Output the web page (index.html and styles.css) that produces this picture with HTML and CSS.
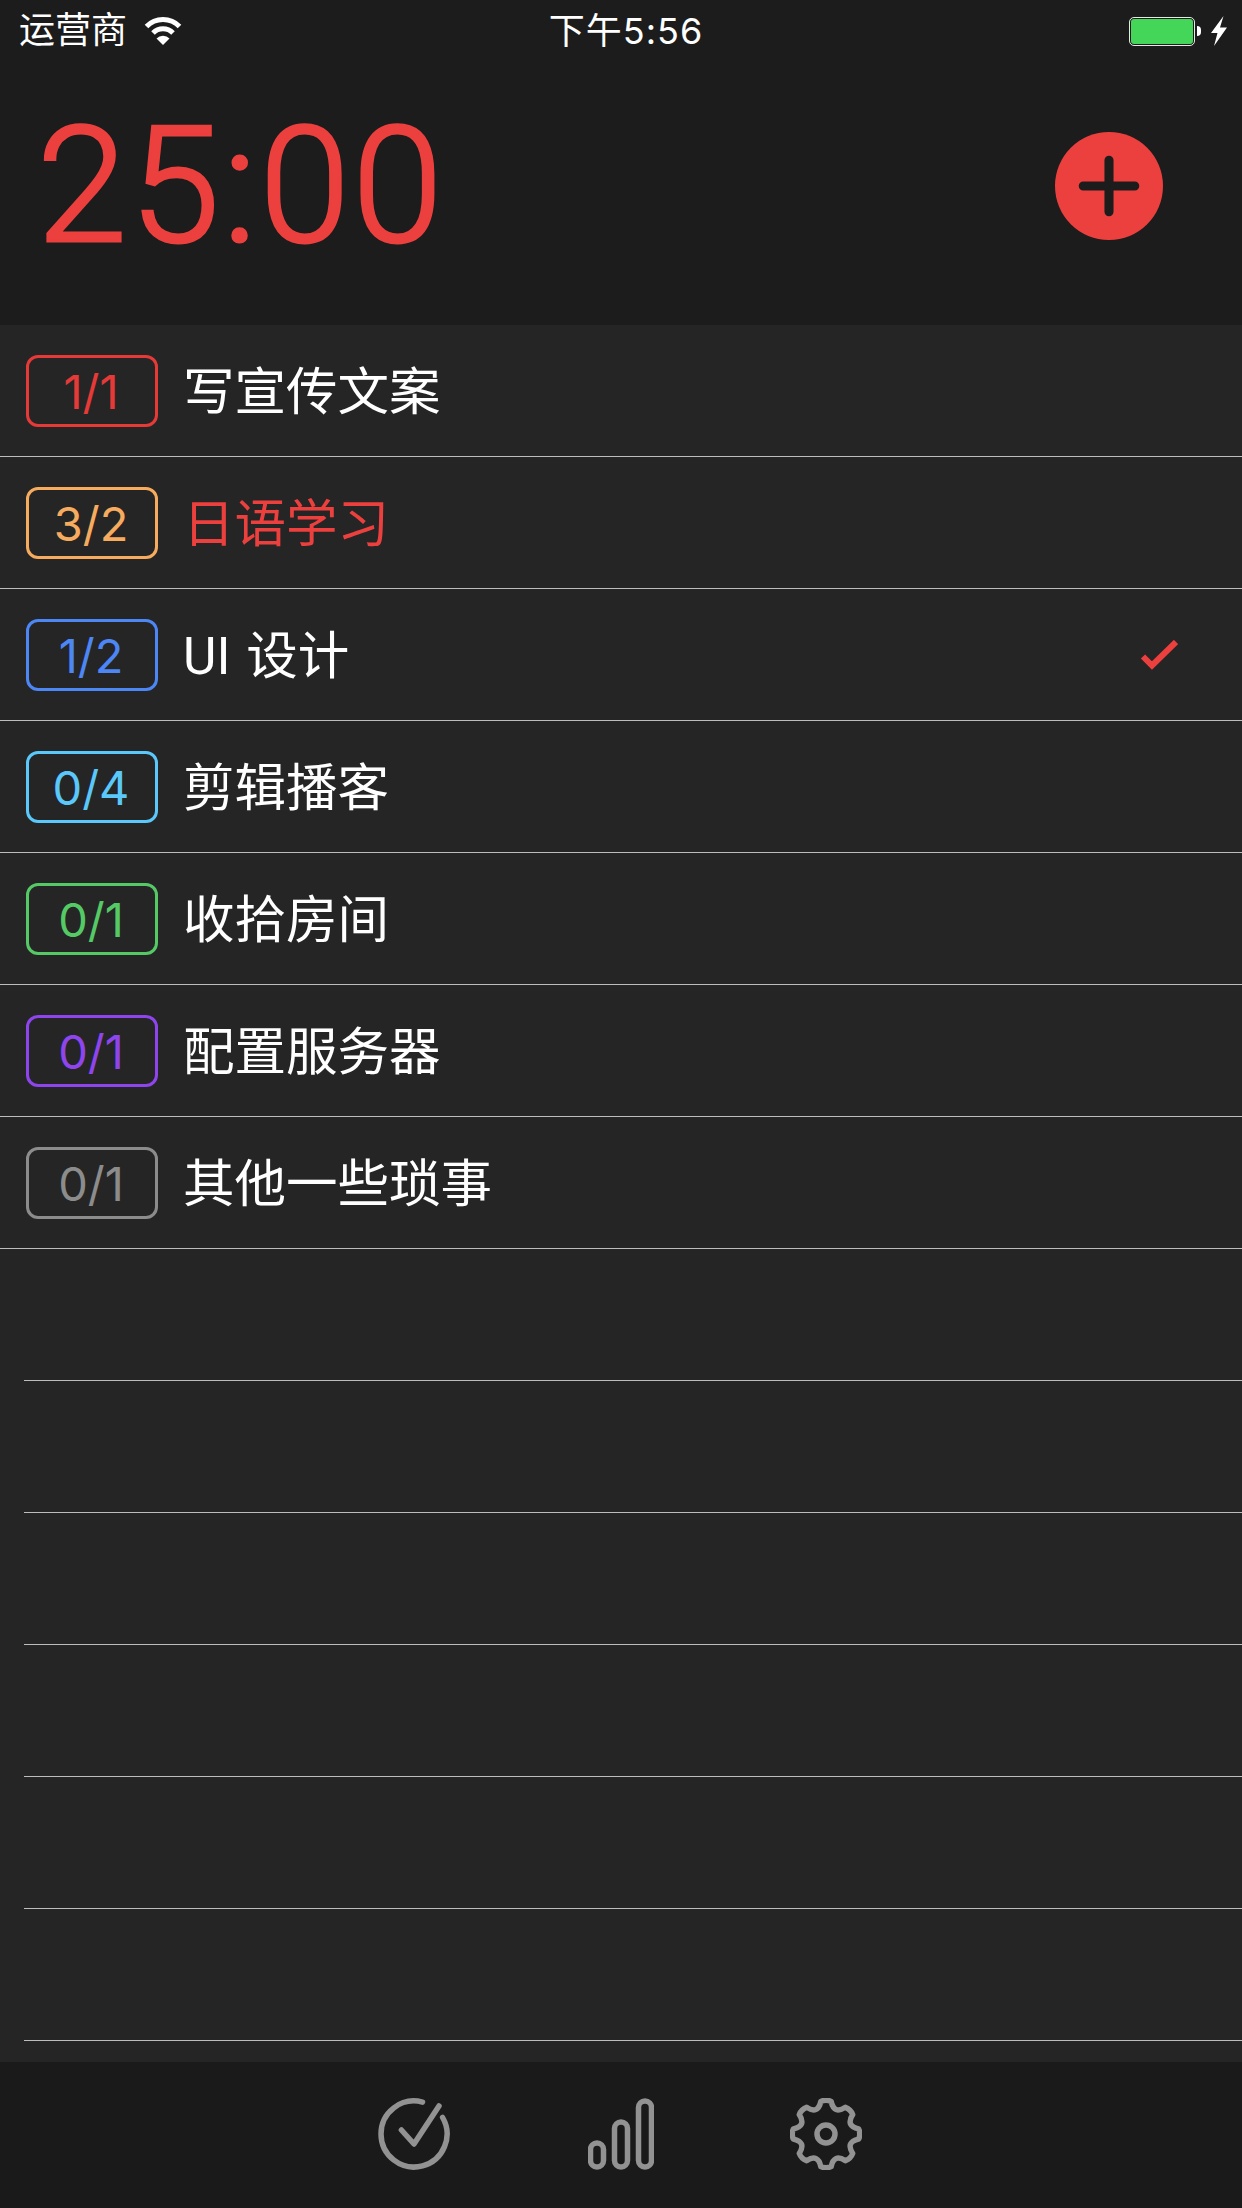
FILE: index.html
```html
<!DOCTYPE html>
<html lang="zh-CN">
<head>
    <meta charset="UTF-8">
    <meta name="viewport" content="width=device-width, initial-scale=1.0">
    <title>番茄任务</title>
    <link rel="stylesheet" href="styles.css">
</head>
<body>
    <div class="header">
        <div class="status-bar">
            <div class="status-left">
                <span class="carrier">运营商</span>
                <svg class="wifi" viewBox="0 0 38 28">
                    <path d="M2.5 9.5 A23 23 0 0 1 35.5 9.5" class="wifi-arc"/>
                    <path d="M9 16 A14 14 0 0 1 29 16" class="wifi-arc"/>
                    <path d="M19 28 L12.5 21.5 A9 9 0 0 1 25.5 21.5 Z" class="wifi-dot"/>
                </svg>
            </div>
            <span class="clock">下午5:56</span>
            <div class="status-right">
                <div class="battery"><div class="battery-fill"></div></div>
                <div class="battery-nub"></div>
                <svg class="bolt" viewBox="0 0 16 30">
                    <polygon points="12.5,0 0,17 6.5,17 3,30 16,11.5 9,11.5"/>
                </svg>
            </div>
        </div>
        <div class="timer-row">
            <span class="timer">25:00</span>
            <button class="add-btn">
                <svg viewBox="0 0 107 107">
                    <path d="M53.5 28 V79 M28 53.5 H79"/>
                </svg>
            </button>
        </div>
    </div>

    <div class="list">
        <div class="row">
            <span class="badge badge-red">1/1</span>
            <span class="title">写宣传文案</span>
        </div>
        <div class="row">
            <span class="badge badge-orange">3/2</span>
            <span class="title title-over">日语学习</span>
        </div>
        <div class="row">
            <span class="badge badge-blue">1/2</span>
            <span class="title">UI 设计</span>
            <svg class="done" viewBox="0 0 38 30">
                <path d="M3 16.5 L12 25.5 L36 2"/>
            </svg>
        </div>
        <div class="row">
            <span class="badge badge-cyan">0/4</span>
            <span class="title">剪辑播客</span>
        </div>
        <div class="row">
            <span class="badge badge-green">0/1</span>
            <span class="title">收拾房间</span>
        </div>
        <div class="row">
            <span class="badge badge-purple">0/1</span>
            <span class="title">配置服务器</span>
        </div>
        <div class="row">
            <span class="badge badge-grey">0/1</span>
            <span class="title">其他一些琐事</span>
        </div>
        <div class="row row-empty"></div>
        <div class="row row-empty"></div>
        <div class="row row-empty"></div>
        <div class="row row-empty"></div>
        <div class="row row-empty"></div>
        <div class="row row-empty"></div>
    </div>

    <div class="tab-bar">
        <svg class="tab-icon tab-check" viewBox="0 0 72 72">
            <path d="M64.6 19.5 A33 33 0 1 1 44.5 4.1"/>
            <path d="M23.4 32 L36 46 L61 8"/>
        </svg>
        <svg class="tab-icon tab-stats" viewBox="0 0 66 71">
            <rect x="2.5" y="44.5" width="13" height="24" rx="6.5"/>
            <rect x="26.5" y="23.5" width="13" height="45" rx="6.5"/>
            <rect x="50.5" y="2.5" width="13" height="66" rx="6.5"/>
        </svg>
        <svg class="tab-icon tab-gear" viewBox="0 0 72 72">
            <path d="M30.84 3.41 Q36 1 41.16 3.41 Q44.04 16.6 55.4 9.3 Q60.75 11.25 62.7 16.6 Q55.4 27.96 68.59 30.84 Q71 36 68.59 41.16 Q55.4 44.04 62.7 55.4 Q60.75 60.75 55.4 62.7 Q44.04 55.4 41.16 68.59 Q36 71 30.84 68.59 Q27.96 55.4 16.6 62.7 Q11.25 60.75 9.3 55.4 Q16.6 44.04 3.41 41.16 Q1 36 3.41 30.84 Q16.6 27.96 9.3 16.6 Q11.25 11.25 16.6 9.3 Q27.96 16.6 30.84 3.41 Z"/>
            <circle cx="36" cy="36" r="9"/>
        </svg>
    </div>
</body>
</html>
```

FILE: styles.css
```css
html, body {
    margin: 0;
    padding: 0;
}
body {
    width: 1242px;
    height: 2208px;
    display: flex;
    flex-direction: column;
    overflow: hidden;
    background-color: #252525;
    font-family: Roboto, "Noto Sans CJK SC", sans-serif;
    color: #fff;
}

/* top area */
.header {
    height: 325px;
    display: flex;
    flex-direction: column;
    background-color: #1c1c1c;
}
.status-bar {
    height: 62px;
    display: grid;
    grid-template-columns: 1fr auto 1fr;
    align-items: center;
    padding: 0 15px 0 19px;
}
.status-left {
    display: flex;
    align-items: center;
    gap: 17px;
}
.carrier {
    font-size: 36px;
    line-height: 44px;
}
.wifi {
    width: 38px;
    height: 28px;
}
.wifi-arc {
    fill: none;
    stroke: #fff;
    stroke-width: 5;
}
.wifi-dot {
    fill: #fff;
}
.clock {
    font-family: Inter, "Noto Sans CJK SC", sans-serif;
    font-size: 36px;
    letter-spacing: 1px;
    line-height: 44px;
    margin-left: 6px;
}
.status-right {
    display: flex;
    align-items: center;
    justify-content: flex-end;
}
.battery {
    width: 66px;
    height: 29px;
    box-sizing: border-box;
    border: 1px solid #e8e8e8;
    border-radius: 5px;
    padding: 1px;
}
.battery-fill {
    height: 100%;
    background-color: #43d658;
    border-radius: 3px;
}
.battery-nub {
    width: 4px;
    height: 10px;
    margin-left: 2px;
    background-color: #fff;
    border-radius: 0 5px 5px 0;
}
.bolt {
    width: 16px;
    height: 30px;
    margin-left: 10px;
    fill: #fff;
}
.timer-row {
    height: 248px;
    display: flex;
    align-items: center;
    justify-content: space-between;
    padding: 0 79px 0 37px;
}
.timer {
    font-size: 162px;
    font-weight: 300;
    letter-spacing: 3px;
    line-height: 1;
    color: #ec403e;
    -webkit-text-stroke: 3px #ec403e;
}
.add-btn {
    width: 108px;
    height: 108px;
    padding: 0;
    border: none;
    border-radius: 50%;
    background-color: #ec403e;
}
.add-btn svg {
    display: block;
    width: 108px;
    height: 108px;
    fill: none;
    stroke: #1c1c1c;
    stroke-width: 9;
    stroke-linecap: round;
}

/* task list */
.list {
    flex: 1;
    background-color: #252525;
}
.row {
    height: 132px;
    box-sizing: border-box;
    display: flex;
    align-items: center;
    padding: 0 64px 0 26px;
    border-bottom: 1px solid #bdbdbd;
}
.row-empty {
    margin-left: 24px;
}
.badge {
    width: 132px;
    height: 72px;
    box-sizing: border-box;
    display: flex;
    align-items: center;
    justify-content: center;
    padding: 1px 2px 0 0;
    border: 3px solid;
    border-radius: 12px;
    font-family: Inter, sans-serif;
    font-size: 47px;
    font-weight: 400;
}
.badge-red { color: #e53a38; }
.badge-orange { color: #f7ab5e; }
.badge-blue { color: #4c87f5; }
.badge-cyan { color: #5ac8fa; }
.badge-green { color: #55c966; }
.badge-purple { color: #8e45ee; }
.badge-grey { color: #8c8c8c; }
.title {
    margin-left: 25px;
    padding-top: 4px;
    font-size: 51.5px;
    font-weight: 400;
    line-height: 60px;
    word-spacing: 3px;
}
.title-over {
    color: #ec403e;
}
.done {
    width: 38px;
    height: 30px;
    margin-left: auto;
    fill: none;
    stroke: #ec403e;
    stroke-width: 6;
}

/* bottom tabs */
.tab-bar {
    height: 146px;
    box-sizing: border-box;
    display: flex;
    align-items: center;
    justify-content: center;
    gap: 136px;
    padding: 0 2px 2px 0;
    background-color: #1a1a1a;
}
.tab-icon {
    height: 72px;
    fill: none;
    stroke: #929292;
    stroke-width: 5.5;
    stroke-linecap: round;
    stroke-linejoin: round;
}
.tab-check {
    width: 72px;
    margin-right: 2px;
}
.tab-gear {
    width: 72px;
}
.tab-stats {
    width: 66px;
}
```
